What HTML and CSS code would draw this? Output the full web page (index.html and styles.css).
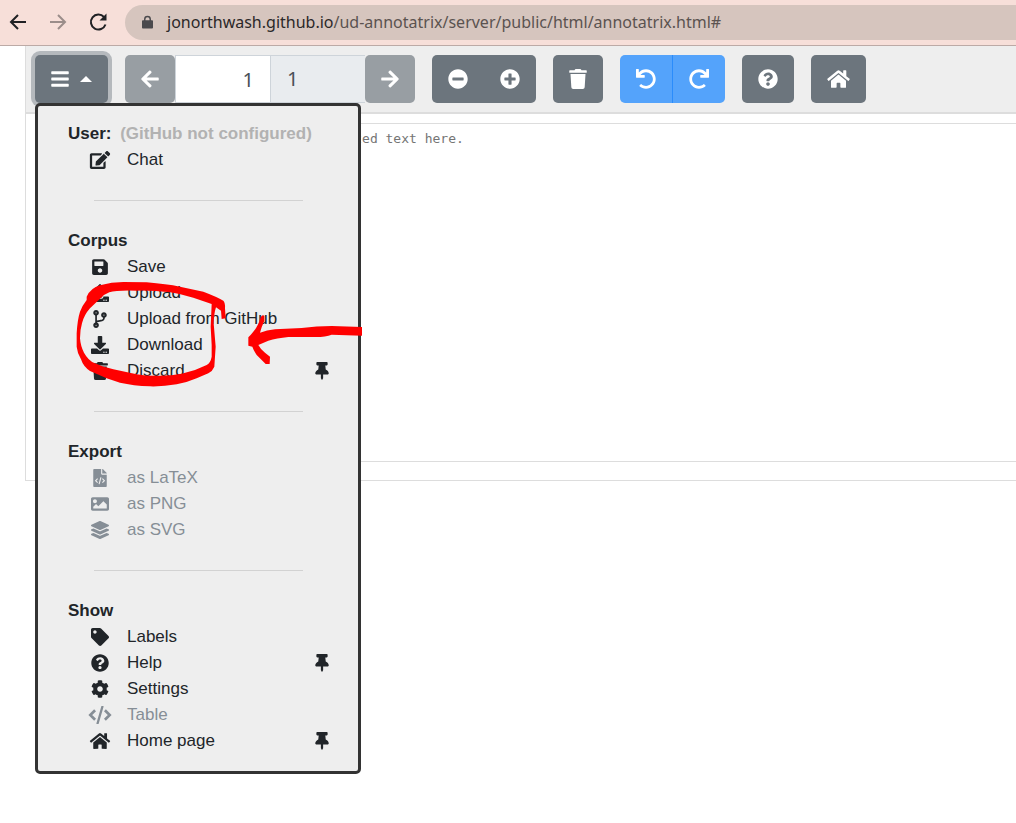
FILE: index.html
```html
<!DOCTYPE html>
<html lang="en">
<head>
<meta charset="utf-8">
<title>UD Annotatrix</title>
<link rel="stylesheet" href="styles.css">
</head>
<body>
<svg class="sprite" aria-hidden="true">
  <symbol id="bars" viewBox="0 0 448 512"><path d="M16 132h416c8.837 0 16-7.163 16-16V76c0-8.837-7.163-16-16-16H16C7.163 60 0 67.163 0 76v40c0 8.837 7.163 16 16 16zm0 160h416c8.837 0 16-7.163 16-16v-40c0-8.837-7.163-16-16-16H16c-8.837 0-16 7.163-16 16v40c0 8.837 7.163 16 16 16zm0 160h416c8.837 0 16-7.163 16-16v-40c0-8.837-7.163-16-16-16H16c-8.837 0-16 7.163-16 16v40c0 8.837 7.163 16 16 16z"/></symbol>
  <symbol id="arrow-left" viewBox="0 0 448 512"><path d="M257.5 445.1l-22.2 22.2c-9.4 9.4-24.6 9.4-33.9 0L7 273c-9.4-9.4-9.4-24.6 0-33.9L201.4 44.7c9.4-9.4 24.6-9.4 33.9 0l22.2 22.2c9.5 9.5 9.3 25-.4 34.3L136.6 216H424c13.3 0 24 10.7 24 24v32c0 13.3-10.7 24-24 24H136.6l120.5 114.8c9.8 9.3 10 24.8.4 34.3z"/></symbol>
  <symbol id="arrow-right" viewBox="0 0 448 512"><path d="M190.5 66.9l22.2-22.2c9.4-9.4 24.6-9.4 33.9 0L441 239c9.4 9.4 9.4 24.6 0 33.9L246.6 467.3c-9.4 9.4-24.6 9.4-33.9 0l-22.2-22.2c-9.5-9.5-9.3-25 .4-34.3L311.4 296H24c-13.3 0-24-10.7-24-24v-32c0-13.3 10.7-24 24-24h287.4L190.9 101.2c-9.8-9.3-10-24.8-.4-34.3z"/></symbol>
  <symbol id="minus" viewBox="0 0 512 512"><path d="M256 8C119 8 8 119 8 256s111 248 248 248 248-111 248-248S393 8 256 8zM124 296c-6.600 0-12-5.400-12-12v-56c0-6.600 5.400-12 12-12h264c6.600 0 12 5.400 12 12v56c0 6.600-5.400 12-12 12H124z" fill-rule="evenodd"/></symbol>
  <symbol id="plus" viewBox="0 0 512 512"><path d="M256 8C119 8 8 119 8 256s111 248 248 248 248-111 248-248S393 8 256 8zm144 276c0 6.600-5.400 12-12 12h-92v92c0 6.600-5.400 12-12 12h-56c-6.600 0-12-5.400-12-12v-92h-92c-6.600 0-12-5.400-12-12v-56c0-6.600 5.400-12 12-12h92v-92c0-6.600 5.400-12 12-12h56c6.600 0 12 5.400 12 12v92h92c6.600 0 12 5.400 12 12v56z" fill-rule="evenodd"/></symbol>
  <symbol id="trash" viewBox="0 0 448 512"><path d="M432 32H312l-9.400-18.700A24 24 0 0 0 281.100 0H166.800a23.720 23.720 0 0 0-21.400 13.300L136 32H16A16 16 0 0 0 0 48v32a16 16 0 0 0 16 16h416a16 16 0 0 0 16-16V48a16 16 0 0 0-16-16zM53.200 467a48 48 0 0 0 47.900 45h245.800a48 48 0 0 0 47.900-45L416 128H32z"/></symbol>
  <symbol id="undo" viewBox="0 0 512 512"><path d="M212.333 224.333H12c-6.627 0-12-5.373-12-12V12C0 5.373 5.373 0 12 0h48c6.627 0 12 5.373 12 12v78.112C117.773 39.279 184.260 7.470 258.175 8.007c136.906.994 246.448 111.623 246.157 248.532C504.041 393.258 393.120 504 256.333 504c-64.089 0-122.496-24.313-166.510-64.215-5.099-4.622-5.334-12.554-.467-17.420l33.967-33.967c4.474-4.474 11.662-4.717 16.401-.525C170.760 415.336 211.580 432 256.333 432c97.268 0 176-78.716 176-176 0-97.267-78.716-176-176-176-58.496 0-110.280 28.476-142.274 72.333h98.274c6.627 0 12 5.373 12 12v48c0 6.627-5.373 12-12 12z"/></symbol>
  <symbol id="help" viewBox="0 0 512 512"><path fill-rule="evenodd" d="M504 256c0 136.997-111.043 248-248 248S8 392.997 8 256C8 119.083 119.043 8 256 8s248 111.083 248 248zM262.655 90c-54.497 0-89.255 22.957-116.549 63.758-3.536 5.286-2.353 12.415 2.715 16.258l34.699 26.310c5.205 3.947 12.621 3.008 16.665-2.122 17.864-22.658 30.113-35.797 57.303-35.797 20.429 0 45.698 13.148 45.698 32.958 0 14.976-12.363 22.667-32.534 33.976C247.128 238.528 216 254.941 216 296v4c0 6.627 5.373 12 12 12h56c6.627 0 12-5.373 12-12v-1.333c0-28.462 83.186-29.647 83.186-106.667 0-58.002-60.165-102-116.531-102zM256 338c-25.365 0-46 20.635-46 46 0 25.364 20.635 46 46 46s46-20.636 46-46c0-25.365-20.635-46-46-46z"/></symbol>
  <symbol id="home" viewBox="0 0 576 512"><path d="M280.370 148.260L96 300.110V464a16 16 0 0 0 16 16l112.060-.290a16 16 0 0 0 15.920-16V368a16 16 0 0 1 16-16h64a16 16 0 0 1 16 16v95.640a16 16 0 0 0 16 16.050L464 480a16 16 0 0 0 16-16V300L295.670 148.260a12.190 12.190 0 0 0-15.300 0zM571.600 251.470L488 182.560V44.050a12 12 0 0 0-12-12h-56a12 12 0 0 0-12 12v72.610L318.470 43a48 48 0 0 0-61 0L4.340 251.470a12 12 0 0 0-1.600 16.900l25.500 31A12 12 0 0 0 45.150 301l235.220-193.740a12.190 12.190 0 0 1 15.300 0L530.900 301a12 12 0 0 0 16.900-1.600l25.500-31a12 12 0 0 0-1.700-16.930z"/></symbol>
  <symbol id="edit" viewBox="0 0 576 512"><path d="M402.600 83.200l90.200 90.200c3.800 3.800 3.800 10 0 13.800L274.400 405.600l-92.800 10.300c-12.400 1.400-22.900-9.100-21.500-21.500l10.300-92.800L388.800 83.200c3.800-3.800 10-3.800 13.800 0zm162-22.900l-48.800-48.800c-15.200-15.200-39.900-15.200-55.200 0l-35.400 35.400c-3.800 3.800-3.800 10 0 13.800l90.200 90.200c3.800 3.800 10 3.800 13.800 0l35.400-35.400c15.200-15.300 15.200-40 0-55.200zM384 346.200V448H64V128h229.800c3.200 0 6.200-1.300 8.500-3.500l40-40c7.600-7.600 2.200-20.500-8.500-20.500H48C21.500 64 0 85.500 0 112v352c0 26.500 21.500 48 48 48h352c26.500 0 48-21.500 48-48V306.200c0-10.700-12.900-16-20.500-8.500l-40 40c-2.200 2.300-3.500 5.300-3.500 8.500z"/></symbol>
  <symbol id="save" viewBox="0 0 448 512"><path d="M433.941 129.941l-83.882-83.882A48 48 0 0 0 316.118 32H48C21.490 32 0 53.490 0 80v352c0 26.510 21.490 48 48 48h352c26.510 0 48-21.490 48-48V163.882a48 48 0 0 0-14.059-33.941zM224 416c-35.346 0-64-28.654-64-64 0-35.346 28.654-64 64-64s64 28.654 64 64c0 35.346-28.654 64-64 64zm96-304.520V212c0 6.627-5.373 12-12 12H76c-6.627 0-12-5.373-12-12V108c0-6.627 5.373-12 12-12h228.520c3.183 0 6.235 1.264 8.485 3.515l3.480 3.480A11.996 11.996 0 0 1 320 111.480z"/></symbol>
  <symbol id="upload" viewBox="0 0 512 512"><path d="M296 384h-80c-13.300 0-24-10.700-24-24V192h-87.700c-17.800 0-26.700-21.500-14.100-34.100L242.300 5.700c7.500-7.500 19.800-7.500 27.300 0l152.200 152.200c12.600 12.600 3.700 34.100-14.100 34.100H320v168c0 13.300-10.700 24-24 24zm216-8v112c0 13.300-10.700 24-24 24H24c-13.300 0-24-10.700-24-24V376c0-13.300 10.700-24 24-24h136v8c0 30.900 25.100 56 56 56h80c30.900 0 56-25.100 56-56v-8h136c13.300 0 24 10.700 24 24zm-124 88c0-11-9-20-20-20s-20 9-20 20 9 20 20 20 20-9 20-20zm64 0c0-11-9-20-20-20s-20 9-20 20 9 20 20 20 20-9 20-20z" fill-rule="evenodd"/></symbol>
  <symbol id="branch" viewBox="0 0 384 512"><path fill-rule="evenodd" d="M384 144c0-44.200-35.800-80-80-80s-80 35.800-80 80c0 36.400 24.300 67.100 57.500 76.800-.6 16.100-4.200 28.500-11 36.900-15.400 19.200-49.300 22.400-85.200 25.700-28.200 2.600-57.400 5.400-81.300 16.900v-144c32.500-10.200 56-40.500 56-76.300 0-44.200-35.800-80-80-80S0 35.800 0 80c0 35.800 23.500 66.100 56 76.300v199.300C23.500 365.900 0 396.200 0 432c0 44.200 35.800 80 80 80s80-35.800 80-80c0-34-21.200-63.100-51.200-74.600 3.100-5.200 7.800-9.800 14.900-13.400 16.200-8.200 40.400-10.400 66.100-12.800 42.200-3.900 90-8.400 118.200-43.400 14-17.400 21.100-39.800 21.600-67.900 31.600-10.800 54.400-40.700 54.400-75.900zM80 64c8.800 0 16 7.200 16 16s-7.200 16-16 16-16-7.200-16-16 7.200-16 16-16zm0 384c-8.800 0-16-7.200-16-16s7.200-16 16-16 16 7.200 16 16-7.200 16-16 16zm224-320c8.800 0 16 7.200 16 16s-7.200 16-16 16-16-7.200-16-16 7.200-16 16-16z"/></symbol>
  <symbol id="download" viewBox="0 0 512 512"><path d="M216 0h80c13.300 0 24 10.700 24 24v168h87.700c17.800 0 26.700 21.500 14.100 34.100L269.700 378.300c-7.500 7.500-19.800 7.500-27.300 0L90.100 226.100c-12.600-12.600-3.700-34.100 14.100-34.100H192V24c0-13.300 10.700-24 24-24zm296 376v112c0 13.300-10.700 24-24 24H24c-13.300 0-24-10.700-24-24V376c0-13.300 10.700-24 24-24h146.700l49 49c20.100 20.100 52.500 20.100 72.600 0l49-49H488c13.300 0 24 10.700 24 24zm-124 88c0-11-9-20-20-20s-20 9-20 20 9 20 20 20 20-9 20-20zm64 0c0-11-9-20-20-20s-20 9-20 20 9 20 20 20 20-9 20-20z" fill-rule="evenodd"/></symbol>
  <symbol id="pin" viewBox="0 0 384 512"><path d="M298.028 214.267L285.793 96H328c13.255 0 24-10.745 24-24V24c0-13.255-10.745-24-24-24H56C42.745 0 32 10.745 32 24v48c0 13.255 10.745 24 24 24h42.207L85.972 214.267C37.465 236.820 0 277.261 0 328c0 13.255 10.745 24 24 24h136v104.007c0 1.242.289 2.467.845 3.578l24 48c2.941 5.882 11.364 5.893 14.311 0l24-48a8.008 8.008 0 0 0 .845-3.578V352h136c13.255 0 24-10.745 24-24-.001-51.183-37.983-91.420-85.973-113.733z"/></symbol>
  <symbol id="file-code" viewBox="0 0 384 512"><path d="M384 121.941V128H256V0h6.059c6.365 0 12.470 2.529 16.971 7.029l97.941 97.941A24.005 24.005 0 0 1 384 121.941zM248 160c-13.200 0-24-10.800-24-24V0H24C10.745 0 0 10.745 0 24v464c0 13.255 10.745 24 24 24h336c13.255 0 24-10.745 24-24V160H248z"/><path d="M124 274l-56 57 56 57M260 274l56 57-56 57M218 238l-52 190" fill="none" stroke="#eee" stroke-width="32"/></symbol>
  <symbol id="image" viewBox="0 0 512 512"><path d="M464 448H48c-26.510 0-48-21.490-48-48V112c0-26.510 21.490-48 48-48h416c26.510 0 48 21.490 48 48v288c0 26.510-21.490 48-48 48zM112 120c-30.928 0-56 25.072-56 56s25.072 56 56 56 56-25.072 56-56-25.072-56-56-56zM64 384h384V272l-87.515-87.515c-4.686-4.686-12.284-4.686-16.971 0L208 320l-55.515-55.515c-4.686-4.686-12.284-4.686-16.971 0L64 336v48z"/></symbol>
  <symbol id="layers" viewBox="0 0 512 512"><path d="M12.410 148.020l232.940 105.670c6.800 3.090 14.490 3.090 21.290 0l232.940-105.670c16.550-7.510 16.550-32.520 0-40.030L266.650 2.310a25.607 25.607 0 0 0-21.290 0L12.410 107.980c-16.550 7.510-16.550 32.530 0 40.040zm487.180 88.280l-58.090-26.330-161.640 73.270c-7.560 3.430-15.590 5.170-23.860 5.170s-16.290-1.740-23.860-5.170L70.510 209.970l-58.100 26.330c-16.550 7.500-16.550 32.500 0 40l232.940 105.590c6.800 3.080 14.490 3.080 21.290 0L499.590 276.300c16.550-7.500 16.550-32.500 0-40zm0 127.800l-57.870-26.230-161.860 73.370c-7.560 3.430-15.590 5.170-23.860 5.170s-16.290-1.740-23.860-5.170L70.290 337.870 12.410 364.100c-16.550 7.500-16.550 32.500 0 40l232.940 105.590c6.800 3.080 14.490 3.080 21.290 0L499.590 404.100c16.550-7.500 16.550-32.500 0-40z"/></symbol>
  <symbol id="tag" viewBox="0 0 512 512"><path d="M0 252.118V48C0 21.490 21.490 0 48 0h204.118a48 48 0 0 1 33.941 14.059l211.882 211.882c18.745 18.745 18.745 49.137 0 67.882L293.823 497.941c-18.745 18.745-49.137 18.745-67.882 0L14.059 286.059A48 48 0 0 1 0 252.118zM112 64c-26.510 0-48 21.490-48 48s21.490 48 48 48 48-21.490 48-48-21.490-48-48-48z"/></symbol>
  <symbol id="cog" viewBox="0 0 512 512"><path d="M487.400 315.700l-42.600-24.600c4.300-23.200 4.300-47 0-70.200l42.600-24.600c4.900-2.800 7.100-8.600 5.500-14-11.100-35.600-30-67.800-54.700-94.600-3.800-4.100-10-5.100-14.800-2.300L380.800 110c-17.900-15.400-38.500-27.300-60.800-35.100V25.800c0-5.600-3.900-10.500-9.400-11.700-36.700-8.200-74.300-7.800-109.200 0-5.500 1.200-9.400 6.100-9.400 11.700V75c-22.200 7.900-42.800 19.800-60.800 35.100L88.700 85.500c-4.900-2.800-11-1.900-14.800 2.300-24.700 26.700-43.600 58.900-54.700 94.600-1.700 5.400.6 11.200 5.500 14L67.300 221c-4.300 23.200-4.300 47 0 70.200l-42.600 24.600c-4.900 2.800-7.100 8.600-5.500 14 11.100 35.600 30 67.800 54.700 94.600 3.800 4.100 10 5.100 14.800 2.300l42.600-24.600c17.900 15.400 38.500 27.300 60.800 35.100v49.200c0 5.600 3.900 10.500 9.400 11.700 36.700 8.200 74.300 7.800 109.200 0 5.500-1.200 9.400-6.100 9.400-11.700v-49.200c22.200-7.900 42.800-19.800 60.800-35.100l42.600 24.600c4.900 2.800 11 1.900 14.800-2.300 24.700-26.700 43.600-58.900 54.700-94.600 1.500-5.500-.7-11.300-5.600-14.100zM256 336c-44.100 0-80-35.900-80-80s35.900-80 80-80 80 35.900 80 80-35.900 80-80 80z"/></symbol>
  <symbol id="code" viewBox="0 0 640 512"><path d="M180 120L44 256l136 136M460 120l136 136-136 136" fill="none" stroke="currentColor" stroke-width="76"/><path d="M388 20L252 492" fill="none" stroke="currentColor" stroke-width="66" stroke-linecap="round"/></symbol>
</svg>

<header class="browser">
  <button class="nav" aria-label="Back"><svg viewBox="0 0 20 20"><path d="M18 10H3M10 3l-7 7 7 7"/></svg></button>
  <button class="nav nav-off" aria-label="Forward" disabled><svg viewBox="0 0 20 20"><path d="M2 10h15M10 3l7 7-7 7"/></svg></button>
  <button class="nav" aria-label="Reload"><svg viewBox="0 0 20 20"><path d="M16 5a7.500 7.500 0 1 0 1.500 7.500"/><path class="solid" d="M18.500 1.500v7h-7z"/></svg></button>
  <div class="address">
    <svg class="lock" viewBox="0 0 12 14" aria-hidden="true"><path d="M1 5h10q1 0 1 1v7q0 1-1 1H1q-1 0-1-1V6q0-1 1-1z"/><path d="M3 6V4a3 3 0 0 1 6 0v2" fill="none" stroke="currentColor" stroke-width="1.600"/></svg>
    <span class="url"><span class="domain">jonorthwash.github.io</span>/ud-annotatrix/server/public/html/annotatrix.html#</span>
  </div>
</header>

<main class="page">
  <div class="toolbar">
    <div class="menu-wrap">
      <button class="btn btn-menu" aria-label="Menu" aria-expanded="true"><svg class="icon"><use href="#bars"/></svg><span class="caret"></span></button>
      <nav class="menu">
        <section>
          <h2>User: <span class="note">(GitHub not configured)</span></h2>
          <a class="item" href="#"><svg><use href="#edit"/></svg><span>Chat</span></a>
        </section>
        <hr>
        <section>
          <h2>Corpus</h2>
          <a class="item" href="#"><svg><use href="#save"/></svg><span>Save</span></a>
          <a class="item" href="#"><svg><use href="#upload"/></svg><span>Upload</span></a>
          <a class="item" href="#"><svg><use href="#branch"/></svg><span>Upload from GitHub</span></a>
          <a class="item" href="#"><svg><use href="#download"/></svg><span>Download</span></a>
          <a class="item" href="#"><svg><use href="#trash"/></svg><span>Discard</span><svg class="pin"><use href="#pin"/></svg></a>
        </section>
        <hr>
        <section>
          <h2>Export</h2>
          <a class="item off" href="#"><svg><use href="#file-code"/></svg><span>as LaTeX</span></a>
          <a class="item off" href="#"><svg><use href="#image"/></svg><span>as PNG</span></a>
          <a class="item off" href="#"><svg><use href="#layers"/></svg><span>as SVG</span></a>
        </section>
        <hr>
        <section>
          <h2>Show</h2>
          <a class="item" href="#"><svg><use href="#tag"/></svg><span>Labels</span></a>
          <a class="item" href="#"><svg><use href="#help"/></svg><span>Help</span><svg class="pin"><use href="#pin"/></svg></a>
          <a class="item" href="#"><svg><use href="#cog"/></svg><span>Settings</span></a>
          <a class="item off" href="#"><svg><use href="#code"/></svg><span>Table</span></a>
          <a class="item" href="#"><svg><use href="#home"/></svg><span>Home page</span><svg class="pin"><use href="#pin"/></svg></a>
        </section>
        <svg class="scribble" viewBox="0 0 990 390" aria-hidden="true">
          <path fill-rule="evenodd" transform="translate(105 -33)" d="M50 80Q62 54 90 46Q125 36 160 36L230 37Q290 42 330 50L400 65Q440 80 460 92Q466 98 465 115L467 145L455 147L453 122L438 112Q432 130 431 160L437 230L433 290Q428 303 415 310L380 325Q350 338 320 343Q280 350 240 349Q190 347 150 338L110 325L60 303Q40 290 33 268Q22 250 20 230V190Q22 150 30 125Q36 108 50 90zM425 102L370 83Q335 72 300 67Q250 61 200 62Q140 60 118 67Q100 74 90 86L60 115Q42 135 36 160Q30 180 30 205Q32 230 42 248Q55 272 75 280Q95 290 130 298L200 313Q235 319 270 317Q305 317 335 311L375 300L410 285Q422 278 425 260V225L422 170z"/>
          <path transform="translate(600 57)" d="M78 50Q84 43 88 48V62L80 82L75 98Q95 90 120 88L200 84Q245 78 290 78L381 81V107L290 104Q270 112 235 111L160 111Q125 115 100 122L70 135Q76 147 90 158L105 170L104 192H92L65 165Q56 152 52 140L40 137V112Q46 107 56 94Q68 80 78 50z"/>
        </svg>
      </nav>
    </div>
    <div class="group">
      <button class="btn btn-off" aria-label="Previous sentence" disabled><svg class="icon"><use href="#arrow-left"/></svg></button>
      <input class="current" type="text" value="1" aria-label="Current sentence">
      <span class="total">1</span>
      <button class="btn btn-off" aria-label="Next sentence" disabled><svg class="icon"><use href="#arrow-right"/></svg></button>
    </div>
    <div class="group joined">
      <button class="btn" aria-label="Remove sentence"><svg class="icon round"><use href="#minus"/></svg></button>
      <button class="btn" aria-label="Add sentence"><svg class="icon round"><use href="#plus"/></svg></button>
    </div>
    <button class="btn" aria-label="Discard corpus"><svg class="icon"><use href="#trash"/></svg></button>
    <div class="group joined">
      <button class="btn btn-blue" aria-label="Undo"><svg class="icon round"><use href="#undo"/></svg></button>
      <button class="btn btn-blue" aria-label="Redo"><svg class="icon round flip"><use href="#undo"/></svg></button>
    </div>
    <button class="btn" aria-label="Help"><svg class="icon round"><use href="#help"/></svg></button>
    <button class="btn" aria-label="Home page"><svg class="icon wide"><use href="#home"/></svg></button>
  </div>
  <div class="editor">
    <textarea aria-label="Sentence data" placeholder="Type CoNLL-U, CG3, plain text or bracketed text here."></textarea>
  </div>
</main>
</body>
</html>
```

FILE: styles.css
```css
* { box-sizing: border-box; }

body {
  min-height: 100vh;
  margin: 0;
  background: #fff;
  color: #212529;
  font-family: "Liberation Sans", Arial, sans-serif;
  font-size: 17px;
}

button { font: inherit; cursor: pointer; }
svg { fill: currentColor; flex: none; }
.sprite { display: none; }

/* Browser bar */
.browser {
  display: flex;
  align-items: center;
  height: 46px;
  padding: 0 0 1px 8px;
  background: #f7dfd9;
  border-bottom: 1px solid #bcaaa6;
}
.nav {
  width: 20px;
  height: 20px;
  margin-right: 20px;
  padding: 0;
  border: 0;
  background: none;
  color: #202124;
}
.nav svg {
  display: block;
  width: 20px;
  height: 20px;
  fill: none;
  stroke: currentColor;
  stroke-width: 2;
}
.nav .solid { fill: currentColor; stroke: none; }
.nav-off { color: #9b8d8a; }
.address {
  display: flex;
  flex: 1;
  align-items: center;
  gap: 14px;
  height: 35px;
  margin-left: -3px;
  padding-left: 17px;
  border-radius: 18px 0 0 18px;
  background: #d6c5be;
}
.lock { width: 11px; height: 14px; color: #4b4a4d; overflow: visible; }
.url {
  color: #5b5350;
  font-family: "Noto Sans", sans-serif;
  font-size: 16px;
  line-height: 24px;
  white-space: nowrap;
}
.domain { color: #2b2829; }

/* Application */
.page {
  margin-left: 25px;
  border-left: 1px solid #ddd;
  border-bottom: 1px solid #ddd;
}
.toolbar {
  display: flex;
  gap: 17px;
  padding: 9px;
  background: #eee;
  border-bottom: 2px solid #ddd;
}
.btn {
  display: flex;
  align-items: center;
  justify-content: center;
  height: 48px;
  padding: 0 16px;
  border: 0;
  border-radius: 5px;
  background: #6c757d;
  color: #fff;
}
.btn-off { background: #989ea3; }
.btn-blue { background: #54a3fb; }
.btn-blue + .btn-blue { border-left: 1px solid #2a8cfb; }
.btn-menu { gap: 11px; box-shadow: 0 0 0 4px #b5b9bd; }
.icon { width: 18px; height: 20px; }
.round { width: 20px; }
.wide { width: 23px; }
.flip { transform: scaleX(-1); }
.caret {
  border: 6px solid transparent;
  border-top: 0;
  border-bottom-color: #fff;
}
.group { display: flex; }
.joined .btn:first-child { border-radius: 5px 0 0 5px; }
.joined .btn:last-child { border-radius: 0 5px 5px 0; }
.current, .total {
  width: 95px;
  height: 48px;
  padding: 0 16px;
  border: 1px solid #ced4da;
  border-right: 0;
  border-radius: 0;
  color: #495057;
  font-family: "Noto Sans", sans-serif;
  font-size: 20px;
  line-height: 46px;
}
.current { background: #fff; text-align: right; }
.total { background: #e9ecef; }

/* Dropdown menu */
.menu-wrap { position: relative; }
.menu {
  position: absolute;
  z-index: 2;
  top: 48px;
  left: 0;
  width: 326px;
  padding: 15px 27px 17px 30px;
  border: 3px solid #333;
  border-radius: 5px;
  background: #eee;
}
.menu h2 {
  margin: 0;
  font-size: 17px;
  font-weight: bold;
  line-height: 26px;
  white-space: nowrap;
}
.note { margin-left: 4px; color: #b2b2b2; }
.menu hr {
  width: 209px;
  height: 1px;
  margin: 27px 0 27px 26px;
  border: 0;
  background: #d2d2d2;
}
.item {
  display: grid;
  grid-template-columns: 24px 1fr 18px;
  align-items: center;
  column-gap: 15px;
  height: 26px;
  padding-left: 20px;
  color: inherit;
  line-height: 26px;
  text-decoration: none;
  white-space: nowrap;
}
.item svg { width: 24px; height: 18px; }
.item .pin { width: 18px; }
.off { color: #868e96; }

/* Hand-drawn marking over the menu */
.scribble {
  position: absolute;
  top: 175px;
  left: -3px;
  width: 330px;
  height: 130px;
  fill: #f00;
  pointer-events: none;
}

/* Text editor */
.editor { padding: 9px 0 18px 10px; }
textarea {
  display: block;
  width: 100%;
  height: 339px;
  padding: 6px 12px;
  border: 1px solid #ddd;
  border-right: 0;
  background: #fff;
  font-family: "DejaVu Sans Mono", monospace;
  font-size: 13px;
  line-height: 18px;
  resize: none;
}
textarea::placeholder { color: #757575; opacity: 1; }
```
